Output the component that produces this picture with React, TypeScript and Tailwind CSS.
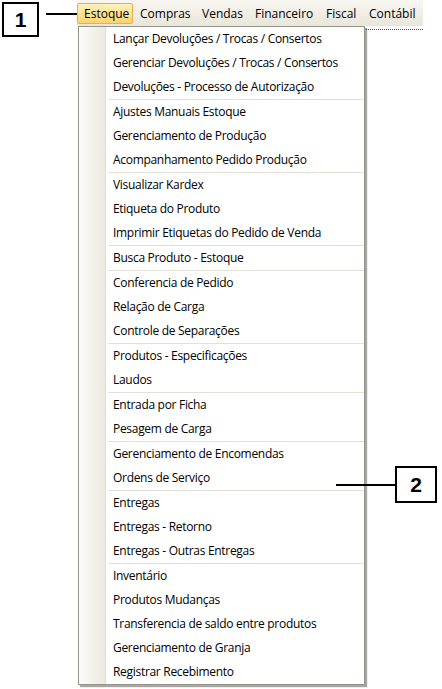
import React from "react";

const groups: string[][] = [
  ["Lançar Devoluções / Trocas / Consertos", "Gerenciar Devoluções / Trocas / Consertos", "Devoluções - Processo de Autorização"],
  ["Ajustes Manuais Estoque", "Gerenciamento de Produção", "Acompanhamento Pedido Produção"],
  ["Visualizar Kardex", "Etiqueta do Produto", "Imprimir Etiquetas do Pedido de Venda"],
  ["Busca Produto - Estoque"],
  ["Conferencia de Pedido", "Relação de Carga", "Controle de Separações"],
  ["Produtos - Especificações", "Laudos"],
  ["Entrada por Ficha", "Pesagem de Carga"],
  ["Gerenciamento de Encomendas", "Ordens de Serviço"],
  ["Entregas", "Entregas - Retorno", "Entregas - Outras Entregas"],
  ["Inventário", "Produtos Mudanças", "Transferencia de saldo entre produtos", "Gerenciamento de Granja", "Registrar Recebimento"],
];

const menuBar = [
  { label: "Estoque", w: "w-[56px]", active: true },
  { label: "Compras", w: "w-[62px]" },
  { label: "Vendas", w: "w-[53px]" },
  { label: "Financeiro", w: "w-[71px]" },
  { label: "Fiscal", w: "w-[43px]" },
  { label: "Contábil", w: "w-[60px]" },
];

export default function App() {
  return (
    <div className="relative w-[442px] h-[689px] bg-white overflow-hidden font-['Open_Sans',sans-serif] text-[12px] text-black">
      <div className="flex items-start">
        <div className="ml-[2px] mt-[2px] w-[37px] h-[35px] border-2 border-black flex items-center justify-center font-['Liberation_Sans',sans-serif] font-bold text-[21px] leading-none">
          1
        </div>
        <div className="ml-[7px] mt-[13px] w-[31px] h-[2px] bg-black" />
        <div className="flex flex-col">
          <div className="w-[346px] h-[26px] bg-gradient-to-b from-[#f7f6f1] to-[#e9e6da] flex items-start pt-[3px]">
            {menuBar.map((m) =>
              m.active ? (
                <div
                  key={m.label}
                  className={`${m.w} h-[21px] border border-[#e8b04a] rounded-[2px] bg-gradient-to-b from-[#fef0b9] to-[#fad56d] pl-[6px] leading-[19px]`}
                >
                  {m.label}
                </div>
              ) : (
                <div key={m.label} className={`${m.w} h-[21px] pl-[7px] leading-[21px]`}>
                  {m.label}
                </div>
              )
            )}
          </div>
          <div className="ml-[287px] mt-[3px] w-[59px] border-t border-dotted border-[#555]" />
        </div>
      </div>

      {/* dropdown menu */}
      <div className="absolute left-[78px] top-[26px] w-[287px] shadow-[2px_2px_1px_rgba(0,0,0,0.35)]">
        <div className="border border-[#97948a] bg-white flex">
          <div className="w-[27px] shrink-0 bg-gradient-to-r from-[#fcfbf8] to-[#ece9df] border-r border-[#e2dfd4]" />
          <div className="flex-1 flex flex-col tracking-[-0.3px]">
            {groups.map((g, gi) => (
              <div key={gi} className={gi < groups.length - 1 ? "border-b border-[#e3e0d7] ml-[2px]" : "ml-[2px]"}>
                {g.map((item) => (
                  <div key={item} className="h-[24px] leading-[24px] pl-[5px] whitespace-nowrap">
                    {item}
                  </div>
                ))}
              </div>
            ))}
          </div>
        </div>
      </div>

      {/* annotation 2 */}
      <div className="absolute left-[336px] top-[466px] flex items-center">
        <div className="w-[59px] h-[2px] bg-black" />
        <div className="w-[42px] h-[37px] border-2 border-black bg-white flex items-center justify-center font-['Liberation_Sans',sans-serif] font-bold text-[21px] leading-none">
          2
        </div>
      </div>
    </div>
  );
}
